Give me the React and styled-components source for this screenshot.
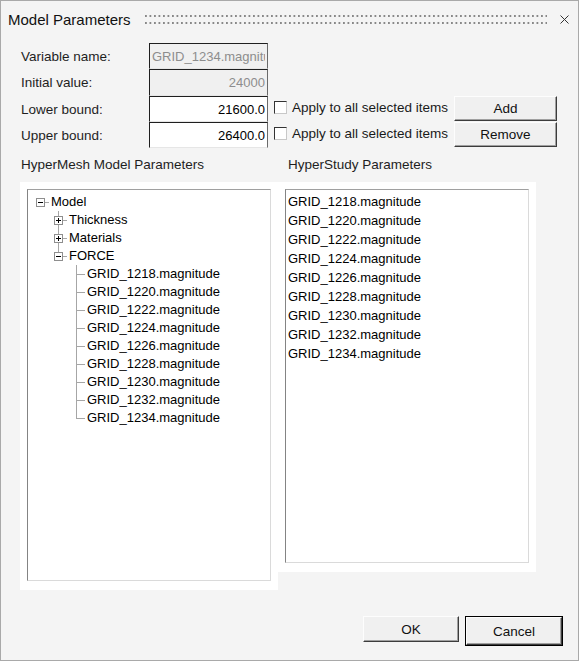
import React from 'react';
import styled, { createGlobalStyle } from 'styled-components';

const GlobalStyle = createGlobalStyle`
  html, body { margin: 0; padding: 0; background: #f4f4f4; }
  body { font-family: "Liberation Sans", Arial, sans-serif; }
`;

const Window = styled.div`
  box-sizing: border-box;
  width: 579px;
  height: 661px;
  border: 1px solid #a9a9a9;
  background: #f4f4f4;
  display: flex;
  flex-direction: column;
  color: #1a1a1a;
  font-size: 13.5px;
`;

const TitleBar = styled.div`
  height: 36px;
  display: flex;
  align-items: center;
  padding: 0 9px 0 7px;
`;

const Title = styled.span`
  width: 121px;
  font-size: 15px;
  color: #111;
  white-space: nowrap;
`;

const Grip = styled.div`
  flex: 1;
  height: 9px;
  margin: 0 12px 0 16px;
  background-image:
    linear-gradient(to right, #888 1.5px, transparent 1.5px),
    linear-gradient(to right, #888 1.5px, transparent 1.5px);
  background-size: 4.5px 2px;
  background-position: 0 0, 0 7px;
  background-repeat: repeat-x;
`;

const CloseButton = styled.button`
  width: 10px;
  height: 10px;
  padding: 0;
  border: 0;
  background: none;
  display: flex;
  align-items: center;
  justify-content: center;
`;

const Form = styled.div`
  display: grid;
  grid-template-columns: 129px 119px 186px 103px;
  grid-template-rows: 26px 27px 26px 26px;
  padding: 6px 21px 0 19px;
`;

const Label = styled.label`
  display: flex;
  align-items: center;
  padding-left: 1px;
  color: #1e1e1e;
`;

const Field = styled.input`
  box-sizing: border-box;
  width: 119px;
  height: 100%;
  margin: 0;
  padding: 0 2px;
  border: 1px solid;
  border-color: #1f1f1f #6a6a6a #e6e6e6 #1f1f1f;
  font: 13px "Liberation Sans", Arial, sans-serif;
  text-align: ${p => (p.$align === 'left' ? 'left' : 'right')};
  background: ${p => (p.disabled ? '#f0f0f0' : '#ffffff')};
  color: ${p => (p.disabled ? '#8d8d8d' : '#000')};
  outline: none;
  -webkit-text-fill-color: ${p => (p.disabled ? '#8d8d8d' : '#000')};
  opacity: 1;
`;

const ApplyOption = styled.div`
  display: flex;
  align-items: center;
  gap: 5px;
  padding: 0 0 4px 6px;
  white-space: nowrap;
`;

const Check = styled.span`
  box-sizing: border-box;
  width: 13px;
  height: 13px;
  border: 1px solid;
  border-color: #333 #c8c8c8 #c8c8c8 #333;
  background: #fff;
  flex: none;
`;

const PushButton = styled.button`
  box-sizing: border-box;
  width: ${p => p.$w || 103}px;
  height: ${p => p.$h || 25}px;
  margin: 0;
  padding: 0;
  border: 1px solid;
  border-color: #fdfdfd #3c3c3c #3c3c3c #fdfdfd;
  box-shadow: inset -1px -1px 0 #a0a0a0;
  background: #f0f0f0;
  font: 13.5px "Liberation Sans", Arial, sans-serif;
  color: #111;
  align-self: start;
`;

const DefaultButton = styled.div`
  box-sizing: border-box;
  border: 1px solid #000;
  display: flex;
`;

const SectionRow = styled.div`
  display: flex;
  padding: 9px 0 0 19px;
`;

const Column = styled.div`
  width: 258px;
  display: flex;
  flex-direction: column;
`;

const SectionLabel = styled.div`
  height: 16px;
  line-height: 16px;
  padding-left: ${p => p.$indent}px;
  margin-bottom: 9px;
  color: #1e1e1e;
`;

const Panel = styled.div`
  box-sizing: border-box;
  height: ${p => p.$h}px;
  background: #fff;
  padding: 7px 7px 9px 7px;
  display: flex;
`;

const ListBox = styled.div`
  box-sizing: border-box;
  flex: 1;
  border: 1px solid;
  border-color: #a0a0a0 #dadada #dadada #848484;
  background: #fff;
  padding: ${p => p.$pad};
  overflow: hidden;
  font-size: 13px;
`;

const ListItem = styled.div`
  height: 19px;
  line-height: 19px;
  color: #000;
  white-space: nowrap;
`;

const TreeRow = styled.div`
  display: flex;
  height: 18px;
  align-items: center;
`;

const Cell = styled.span`
  position: relative;
  flex: none;
  width: 18px;
  height: 18px;
  &::before {
    content: '';
    display: ${p => (p.$up || p.$down ? 'block' : 'none')};
    position: absolute;
    left: 9px;
    width: 1px;
    top: ${p => (p.$up ? '0' : '9px')};
    bottom: ${p => (p.$down ? '0' : '9px')};
    background: #a6a6a6;
  }
  &::after {
    content: '';
    display: ${p => (p.$stub ? 'block' : 'none')};
    position: absolute;
    left: 9px;
    right: 0;
    top: 9px;
    height: 1px;
    background: #a6a6a6;
  }
`;

const Expander = styled.span`
  position: absolute;
  z-index: 1;
  box-sizing: border-box;
  left: 5px;
  top: 5px;
  width: 9px;
  height: 9px;
  border: 1px solid #8e8e8e;
  background: #fff;
  &::before {
    content: '';
    position: absolute;
    left: 1px;
    top: 3px;
    width: 5px;
    height: 1px;
    background: #000;
  }
  &::after {
    content: '';
    display: ${p => (p.$open ? 'none' : 'block')};
    position: absolute;
    left: 3px;
    top: 1px;
    width: 1px;
    height: 5px;
    background: #000;
  }
`;

const NodeText = styled.span`
  padding-left: 2px;
  line-height: 18px;
  color: #000;
  white-space: nowrap;
`;

const Footer = styled.div`
  margin-top: auto;
  display: flex;
  justify-content: flex-end;
  align-items: center;
  gap: 6px;
  padding: 0 15px 14px 0;
`;

const grids = ['1218', '1220', '1222', '1224', '1226', '1228', '1230', '1232', '1234'].map(
  n => `GRID_${n}.magnitude`
);

const tree = [
  {
    label: 'Model',
    open: true,
    children: [
      { label: 'Thickness', children: [{ label: '' }] },
      { label: 'Materials', children: [{ label: '' }] },
      { label: 'FORCE', open: true, children: grids.map(g => ({ label: g })) },
    ],
  },
];

// walk the open nodes into flat rows; guides[i] says whether the ancestor at level i still has siblings below
const flatten = (nodes, level = 0, guides = [], out = []) => {
  nodes.forEach((node, i) => {
    const last = i === nodes.length - 1;
    out.push({ node, level, last, guides, first: level === 0 && i === 0 });
    if (node.open && node.children) {
      flatten(node.children, level + 1, [...guides, !last], out);
    }
  });
  return out;
};

const Tree = () => {
  const rows = flatten(tree);
  return rows.map((r, idx) => (
    <TreeRow key={idx}>
      {r.guides.map((g, j) => (
        <Cell key={j} $up={g && j > 0} $down={g && j > 0} />
      ))}
      <Cell $up={r.level > 0 || !r.first} $down={r.level > 0 && !r.last} $stub>
        {r.node.children && <Expander $open={r.node.open} />}
      </Cell>
      <NodeText>{r.node.label}</NodeText>
    </TreeRow>
  ));
};

const App = () => {
  return (
    <>
      <GlobalStyle />
      <Window>
        <TitleBar>
          <Title>Model Parameters</Title>
          <Grip />
          <CloseButton aria-label="Close">
            <svg width="9" height="9" viewBox="0 0 9 9">
              <path d="M0.5 0.5 L8.5 8.5 M8.5 0.5 L0.5 8.5" stroke="#333" strokeWidth="1" fill="none" />
            </svg>
          </CloseButton>
        </TitleBar>

        <Form>
          <Label>Variable name:</Label>
          <Field disabled $align="left" value="GRID_1234.magnitude" readOnly />
          <span />
          <span />

          <Label>Initial value:</Label>
          <Field disabled value="24000" readOnly />
          <span />
          <span />

          <Label>Lower bound:</Label>
          <Field value="21600.0" readOnly />
          <ApplyOption>
            <Check />
            Apply to all selected items
          </ApplyOption>
          <PushButton>Add</PushButton>

          <Label>Upper bound:</Label>
          <Field value="26400.0" readOnly />
          <ApplyOption>
            <Check />
            Apply to all selected items
          </ApplyOption>
          <PushButton>Remove</PushButton>
        </Form>

        <SectionRow>
          <Column>
            <SectionLabel $indent={1}>HyperMesh Model Parameters</SectionLabel>
            <Panel $h={408}>
              <ListBox $pad="3px 0 0 3px">
                <Tree />
              </ListBox>
            </Panel>
          </Column>
          <Column>
            <SectionLabel $indent={10}>HyperStudy Parameters</SectionLabel>
            <Panel $h={390}>
              <ListBox $pad="2px 0 0 2px">
                {grids.map(g => (
                  <ListItem key={g}>{g}</ListItem>
                ))}
              </ListBox>
            </Panel>
          </Column>
        </SectionRow>

        <Footer>
          <PushButton $w={96} $h={26}>OK</PushButton>
          <DefaultButton>
            <PushButton $w={96} $h={28}>Cancel</PushButton>
          </DefaultButton>
        </Footer>
      </Window>
    </>
  );
};

export default App;
